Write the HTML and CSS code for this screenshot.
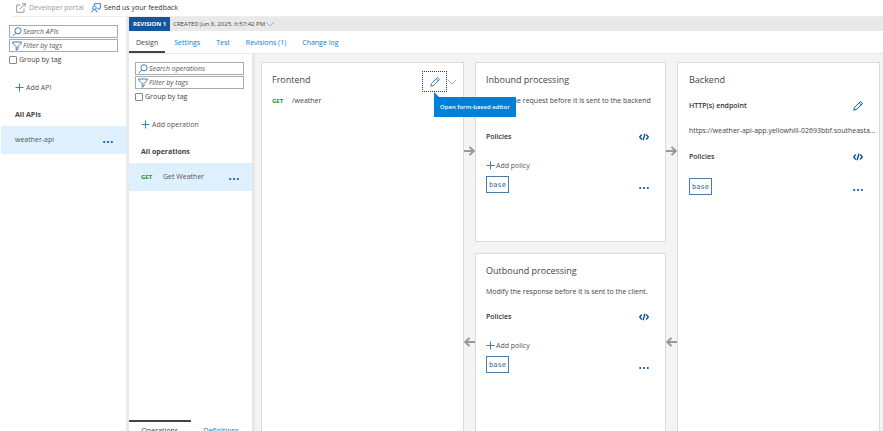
FILE: index.html
```html
<!DOCTYPE html>
<html lang="en">
<head>
<meta charset="utf-8">
<title>API Management - weather-api</title>
<link rel="stylesheet" href="styles.css">
</head>
<body>
<svg class="sprite" aria-hidden="true">
  <symbol id="search" viewBox="0 0 10 10"><circle cx="6" cy="3.8" r="3.1"/><path d="M3.8 6 .6 9.2"/></symbol>
  <symbol id="filter" viewBox="0 0 10 10"><path d="M.6 1h8.800v1L6 5.600V8L4.200 9.200V5.600L.6 2z"/></symbol>
  <symbol id="plus" viewBox="0 0 10 10"><path d="M4.500 .5v8M.5 4.500h8"/></symbol>
  <symbol id="chevron" viewBox="0 0 10 6"><path d="M1 1l4 4 4-4"/></symbol>
  <symbol id="pencil" viewBox="0 0 10 10"><path d="M.8 9.200l.7-2.800L7 .9q.5-.4 1 0l1.100 1.100q.4.5 0 1L3.600 8.500zM6.200 1.800l2.100 2.100"/></symbol>
  <symbol id="code" viewBox="0 0 10 8"><path d="M2.800 1.500.700 4l2.100 2.500M7.200 1.500 9.300 4 7.200 6.500M5.900.700 4.100 7.300"/></symbol>
  <symbol id="dots" viewBox="0 0 10 4"><circle cx="1.200" cy="2" r="1.100"/><circle cx="5" cy="2" r="1.100"/><circle cx="8.800" cy="2" r="1.100"/></symbol>
  <symbol id="arrow" viewBox="0 0 11 10"><path d="M0 5h9.500M5.500.900 9.700 5 5.500 9.100"/></symbol>
  <symbol id="popout" viewBox="0 0 10 10"><path d="M4.500 2H.700v7.300H8V5.500M6 .700h3.300V4M9.200.800 4 6"/></symbol>
  <symbol id="feedback" viewBox="0 0 10 10"><path d="M3.500 2.500V.700h5.900v4.500H8.200v1.500L6.700 5.200H6.200M.700 9.500q.2-2.700 2.700-2.900 2.400.2 2.700 2.900"/><circle cx="3.400" cy="4.700" r="1.800"/></symbol>
</svg>

<div class="app">
  <header class="toolbar">
    <button class="tool muted" disabled><svg class="icon"><use href="#popout"/></svg>Developer portal</button>
    <button class="tool"><svg class="icon blue"><use href="#feedback"/></svg>Send us your feedback</button>
  </header>

  <div class="workspace">
    <aside class="panel apis">
      <div class="filters">
        <label class="field"><svg class="icon blue"><use href="#search"/></svg><input type="text" placeholder="Search APIs" aria-label="Search APIs"></label>
        <label class="field"><svg class="icon blue"><use href="#filter"/></svg><input type="text" placeholder="Filter by tags" aria-label="Filter by tags"></label>
        <label class="check"><input type="checkbox">Group by tag</label>
      </div>
      <button class="add"><svg class="icon blue"><use href="#plus"/></svg>Add API</button>
      <h2 class="list-title">All APIs</h2>
      <div class="row"><a href="#weather-api">weather-api</a><button class="more" aria-label="More"><svg class="dots"><use href="#dots"/></svg></button></div>
    </aside>

    <main class="main">
      <div class="revision">
        <strong class="badge">REVISION 1</strong>
        <button class="created">CREATED Jun 8, 2025, 6:57:42 PM<svg class="chevron"><use href="#chevron"/></svg></button>
      </div>
      <nav class="tabs">
        <a class="tab active" href="#design">Design</a>
        <a class="tab" href="#settings">Settings</a>
        <a class="tab" href="#test">Test</a>
        <a class="tab" href="#revisions">Revisions (1)</a>
        <a class="tab" href="#changelog">Change log</a>
      </nav>

      <div class="design">
        <section class="panel operations">
          <div class="filters">
            <label class="field"><svg class="icon blue"><use href="#search"/></svg><input type="text" placeholder="Search operations" aria-label="Search operations"></label>
            <label class="field"><svg class="icon blue"><use href="#filter"/></svg><input type="text" placeholder="Filter by tags" aria-label="Filter by tags"></label>
            <label class="check"><input type="checkbox">Group by tag</label>
          </div>
          <button class="add"><svg class="icon blue"><use href="#plus"/></svg>Add operation</button>
          <h2 class="list-title">All operations</h2>
          <div class="row"><span class="verb">GET</span><a href="#get-weather">Get Weather</a><button class="more" aria-label="More"><svg class="dots"><use href="#dots"/></svg></button></div>
          <nav class="switch">
            <a class="active" href="#operations">Operations</a>
            <a href="#definitions">Definitions</a>
          </nav>
        </section>

        <div class="canvas">
          <section class="card frontend">
            <div class="card-head">
              <h3>Frontend</h3>
              <div class="edit-group">
                <button class="edit" aria-describedby="edit-tip"><svg class="icon blue"><use href="#pencil"/></svg></button>
                <button class="expand" aria-label="Choose editor"><svg class="chevron"><use href="#chevron"/></svg></button>
                <span class="tooltip" id="edit-tip" role="tooltip">Open form-based editor</span>
              </div>
            </div>
            <p class="route"><span class="verb">GET</span>/weather</p>
          </section>

          <svg class="arrow request first"><use href="#arrow"/></svg>

          <section class="card inbound">
            <div class="card-head"><h3>Inbound processing</h3></div>
            <p class="text">Modify the request before it is sent to the backend</p>
            <div class="line"><h4>Policies</h4><button aria-label="Code editor"><svg class="code"><use href="#code"/></svg></button></div>
            <button class="policy-add"><svg class="icon blue"><use href="#plus"/></svg>Add policy</button>
            <div class="line policy"><button class="base">base</button><button aria-label="More"><svg class="dots"><use href="#dots"/></svg></button></div>
          </section>

          <svg class="arrow request second"><use href="#arrow"/></svg>

          <section class="card backend">
            <div class="card-head"><h3>Backend</h3></div>
            <div class="line endpoint"><h4>HTTP(s) endpoint</h4><button aria-label="Edit endpoint"><svg class="icon"><use href="#pencil"/></svg></button></div>
            <p class="text url">https://weather-api-app.yellowhill-02693bbf.southeasta...</p>
            <div class="line"><h4>Policies</h4><button aria-label="Code editor"><svg class="code"><use href="#code"/></svg></button></div>
            <div class="line policy"><button class="base">base</button><button aria-label="More"><svg class="dots"><use href="#dots"/></svg></button></div>
          </section>

          <svg class="arrow response second"><use href="#arrow"/></svg>

          <section class="card outbound">
            <div class="card-head"><h3>Outbound processing</h3></div>
            <p class="text">Modify the response before it is sent to the client.</p>
            <div class="line"><h4>Policies</h4><button aria-label="Code editor"><svg class="code"><use href="#code"/></svg></button></div>
            <button class="policy-add"><svg class="icon blue"><use href="#plus"/></svg>Add policy</button>
            <div class="line policy"><button class="base">base</button><button aria-label="More"><svg class="dots"><use href="#dots"/></svg></button></div>
          </section>

          <svg class="arrow response first"><use href="#arrow"/></svg>
        </div>
      </div>
    </main>
  </div>
</div>
</body>
</html>
```
FILE: styles.css
```css
* { box-sizing: border-box; }

body {
  margin: 0;
  overflow: hidden;
  background: #fff;
  color: #444;
  font: 7px/12px "Open Sans", "Noto Sans", sans-serif;
}

h2, h3, h4, p { margin: 0; }
a { color: inherit; text-decoration: none; }

button {
  display: flex;
  align-items: center;
  margin: 0;
  padding: 0;
  border: 0;
  background: none;
  color: inherit;
  font: inherit;
  white-space: nowrap;
}

svg { flex: none; fill: none; stroke: currentColor; }
.sprite { position: absolute; width: 0; height: 0; }
.icon { width: 10px; height: 10px; }
.blue { color: #3a80c4; }
.code { width: 10px; height: 8px; color: #0b55a5; stroke-width: 1.4; }
.dots { width: 10px; height: 4px; color: #0b55a5; fill: currentColor; stroke: none; }
.chevron { width: 10px; height: 6px; color: #8fb5d4; }

.app {
  display: flex;
  flex-direction: column;
  height: calc(100vh + 11px);
}

.toolbar {
  display: flex;
  flex: none;
  gap: 7px;
  height: 17px;
  margin-left: 12px;
  padding: 0 4px 1px;
  border-bottom: 1px solid #eee;
}

.tool { gap: 3px; color: #333; }
.tool.muted { color: #999; }

.workspace { display: flex; flex: 1; min-height: 0; padding-left: 1px; }

.panel { display: flex; flex: none; flex-direction: column; background: #fff; }
.apis { width: 128px; border-right: 3px solid #e9e9e9; padding-top: 8px; }
.filters { padding: 0 8px; }

.field {
  display: flex;
  align-items: center;
  gap: 1px;
  height: 13px;
  margin-bottom: 1px;
  padding-left: 2px;
  border: 1px solid #aaa;
}

.field input {
  flex: 1;
  min-width: 0;
  height: 11px;
  padding: 0;
  border: 0;
  outline: 0;
  background: none;
  font: inherit;
}

.field input::placeholder { color: #555; font-style: italic; opacity: 1; }

.check { display: flex; align-items: center; gap: 2px; height: 14px; }

.check input {
  appearance: none;
  width: 8px;
  height: 8px;
  margin: 0;
  border: 1px solid #888;
  border-radius: 1px;
}

.add { gap: 1px; height: 14px; margin: 14px 14px 0; color: #555; }
.list-title { height: 18px; margin: 11px 14px 2px; font-size: 7px; line-height: 18px; }

.row {
  display: flex;
  align-items: center;
  height: 28px;
  padding: 0 13px 0 14px;
  background: #def0fd;
  color: #555;
}

.row .more { margin-left: auto; padding-top: 4px; }
.verb { color: #129a20; font-size: 6px; font-weight: 700; }
.row .verb { width: 22px; }

.main { display: flex; flex: 1; flex-direction: column; min-width: 0; }

.revision {
  display: flex;
  flex: none;
  height: 14px;
  background: #e9e9e9;
  font-size: 6px;
  line-height: 14px;
}

.badge { padding: 0 4px; background: #13569c; color: #fff; }
.created { padding-left: 3px; }

.tabs { display: flex; flex: none; gap: 2px; height: 22px; line-height: 24px; }
.tab { padding: 0 7px; color: #0b7fd3; }
.tab.active { border-bottom: 2px solid #444; color: #444; }

.design { display: flex; flex: 1; min-height: 0; }

.operations {
  width: 126px;
  padding-top: 8px;
  border-top: 1px solid #e8e8e8;
  border-right: 3px solid #e7e7e7;
}

.operations .filters { padding-left: 6px; }
.operations .add { margin-left: 12px; }
.operations .list-title { margin-left: 12px; }
.operations .row { padding-left: 12px; }

.switch { display: flex; height: 22px; margin-top: auto; text-align: center; line-height: 18px; }
.switch a { flex: 1; border-top: 2px solid transparent; color: #0b7fd3; }
.switch .active { border-color: #444; color: #444; }

.canvas {
  display: grid;
  flex: 1;
  grid-template-columns: 203fr 11px 191fr 11px 203fr;
  grid-template-rows: 180px 180px;
  row-gap: 11px;
  min-width: 0;
  padding: 8px 3px 0 6px;
  border-top: 1px solid #e8e8e8;
  background: #f4f4f4;
}

.card {
  min-width: 0;
  padding: 9px 10px;
  border: 1px solid #dadada;
  background: #fff;
}

.frontend { grid-area: 1 / 1 / 3 / 2; }
.inbound { grid-area: 1 / 3; }
.outbound { grid-area: 2 / 3; }
.backend { grid-area: 1 / 5 / 3 / 6; }

.arrow { width: 11px; height: 10px; margin-bottom: 2px; align-self: center; color: #999; stroke-width: 2; }
.request { grid-row: 1; }
.response { grid-row: 2; transform: scaleX(-1); }
.first { grid-column: 2; }
.second { grid-column: 4; }

.card-head { display: flex; justify-content: space-between; height: 16px; }
h3 { font-size: 9px; font-weight: 400; line-height: 16px; }
h4 { font-size: 7px; font-weight: 600; line-height: 12px; }

.edit-group { position: relative; display: flex; align-items: center; height: 19px; margin-right: -4px; }
.edit { justify-content: center; width: 25px; height: 21px; border: 1px dotted #35317f; }

.tooltip {
  position: absolute;
  z-index: 1;
  top: 25px;
  left: 12px;
  padding: 4px 6px;
  background: #0080d8;
  color: #fff;
  font-size: 6px;
  font-weight: 600;
  white-space: nowrap;
}

.tooltip::before {
  content: "";
  position: absolute;
  bottom: 100%;
  left: 0;
  border-bottom: 5px solid #0080d8;
  border-right: 5px solid transparent;
}

.route { display: flex; margin-top: 7px; }
.route .verb { width: 20px; }
.text { margin: 7px 0 13px; white-space: nowrap; }
.inbound .text { margin-bottom: 24px; }
.line { display: flex; align-items: center; justify-content: space-between; padding-right: 6px; color: #333; }
.policy-add { margin-top: 17px; height: 12px; color: #555; }

.policy { margin-top: 4px; }
.policy > :last-child { padding-top: 6px; }

.base {
  height: 17px;
  padding: 0 2px;
  border: 1px solid #4b7dab;
  color: #316896;
  font: 7px "DejaVu Sans Mono", monospace;
}

.backend { padding-left: 11px; }
.endpoint { margin-top: 12px; }
.endpoint .icon { color: #0b55a5; }
.backend .text { margin: 13px 0 14px; }
.backend .policy { margin-top: 15px; }
```
